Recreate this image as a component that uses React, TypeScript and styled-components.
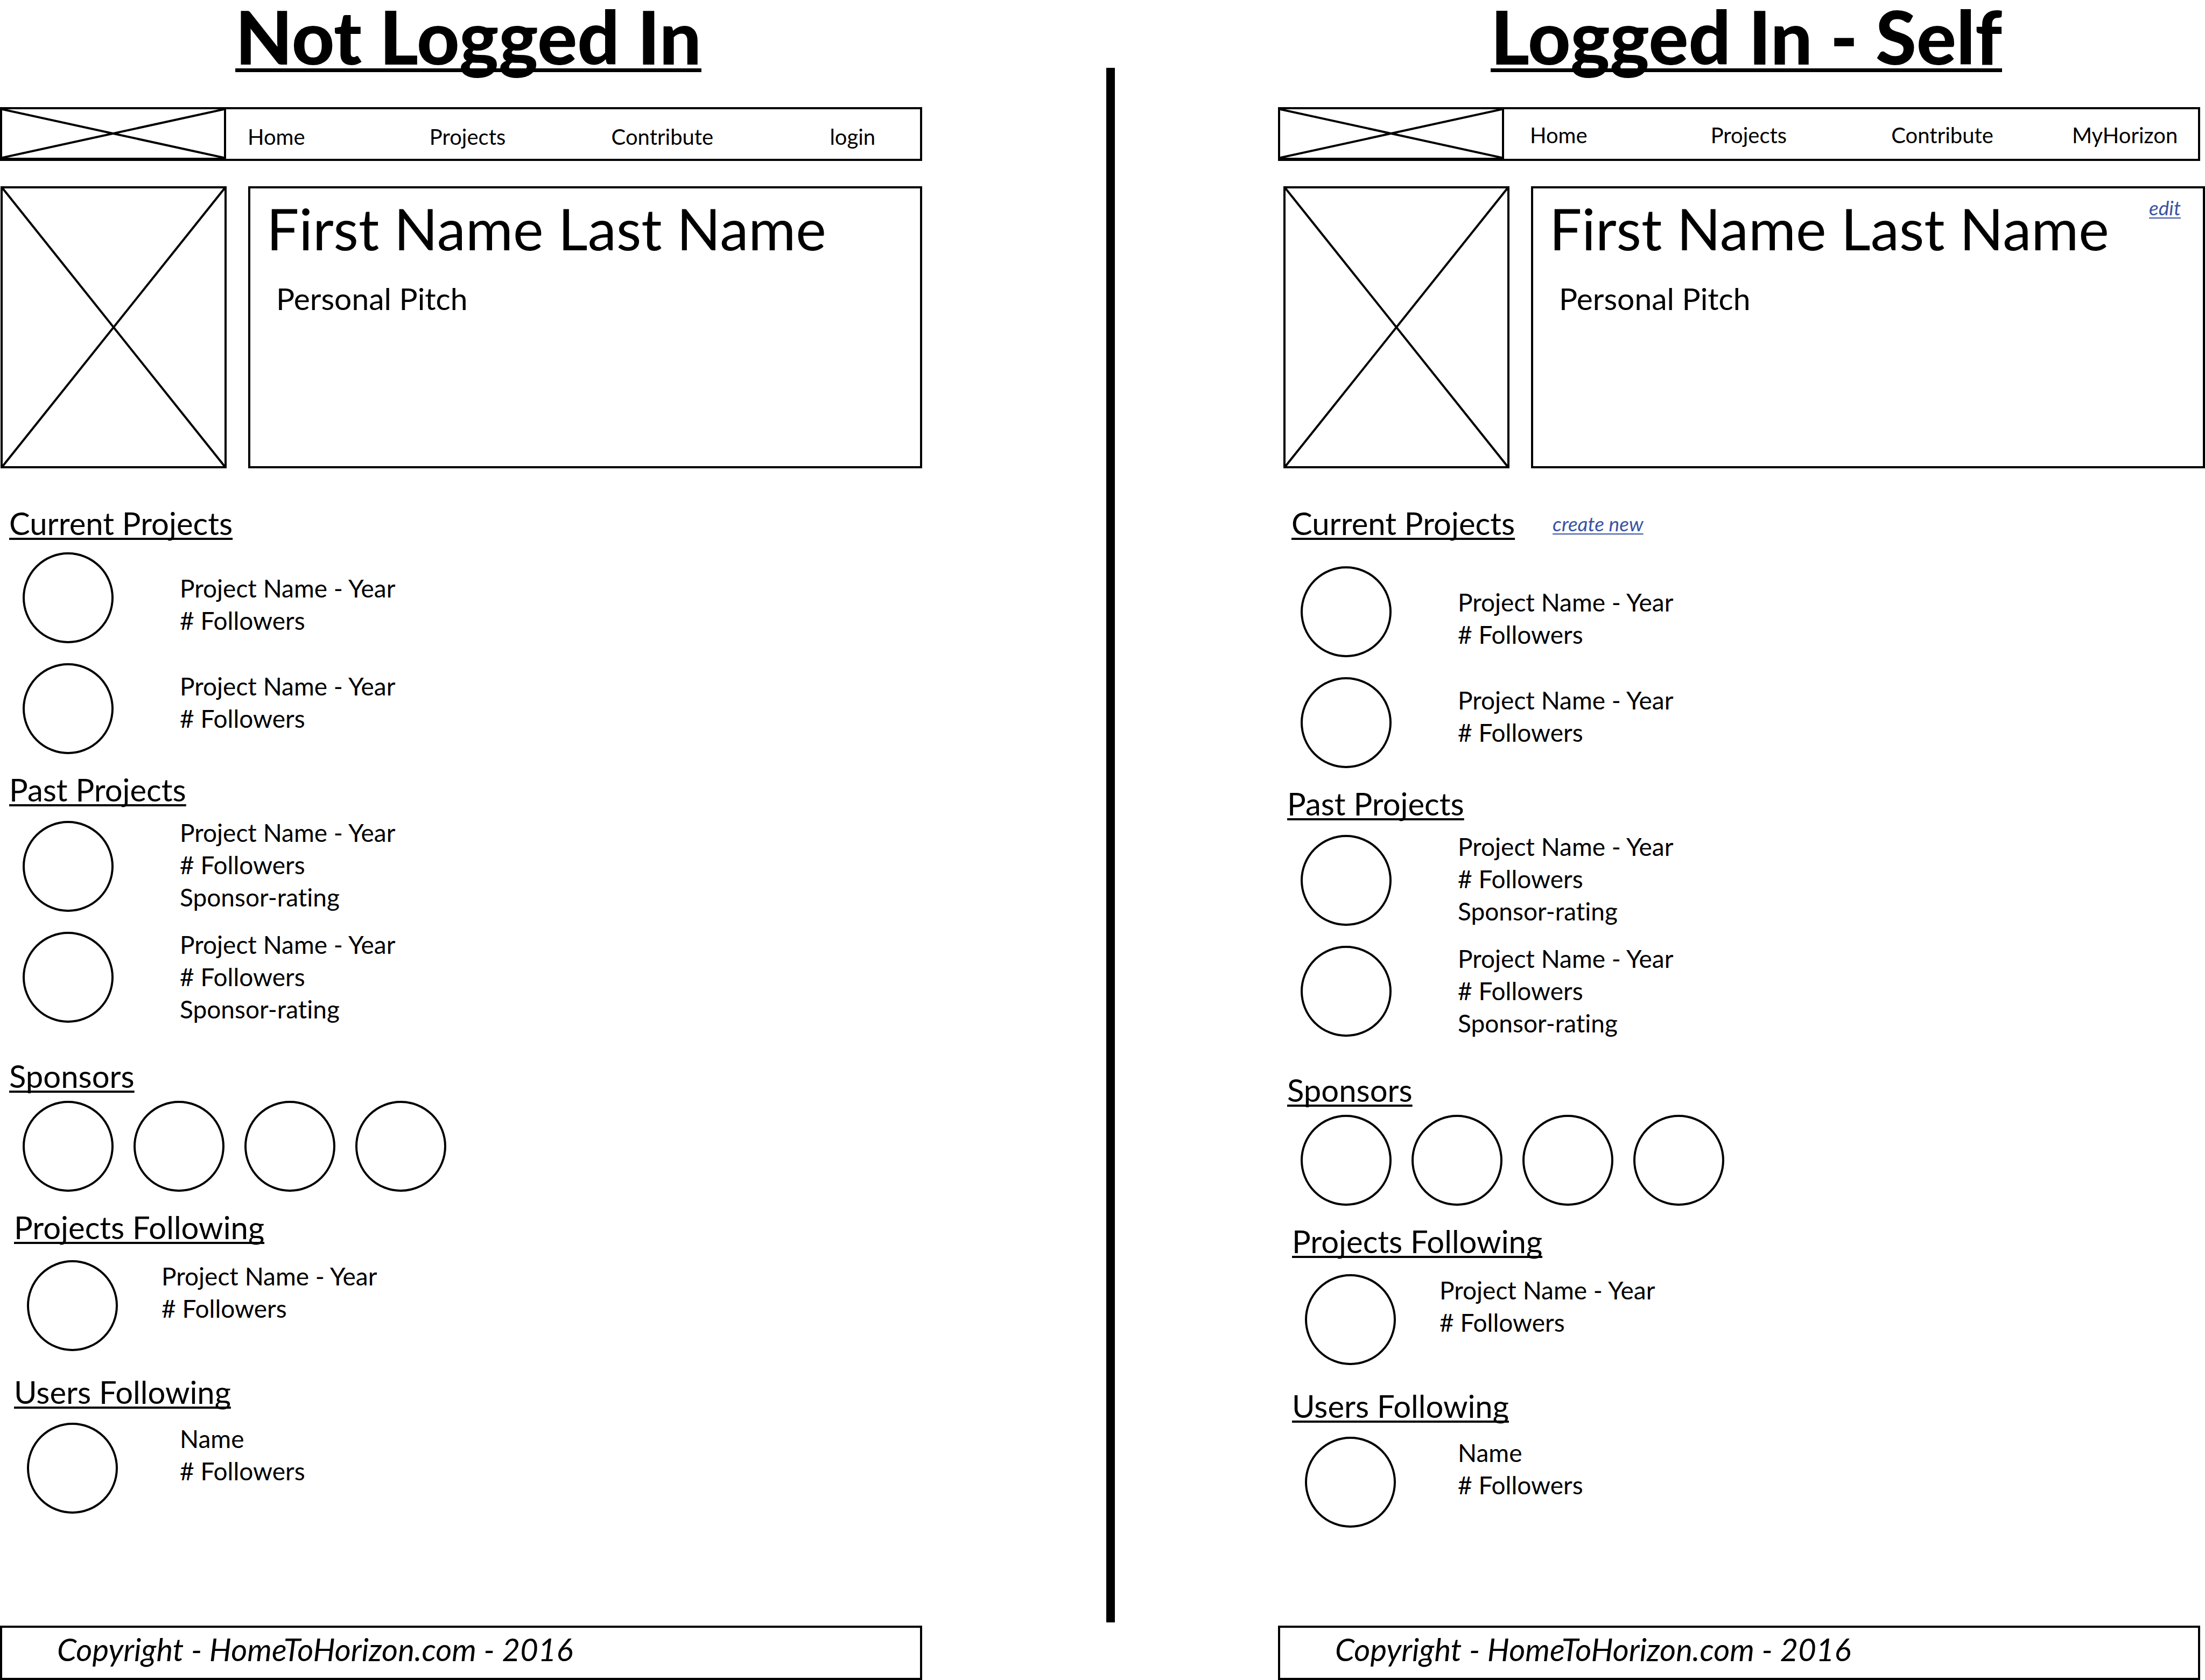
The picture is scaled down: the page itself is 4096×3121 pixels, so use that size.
import React from "react";
import styled, { createGlobalStyle } from "styled-components";

const ink = "#000";
const stroke = `4px solid ${ink}`;

const GlobalStyle = createGlobalStyle`
  *, *::before, *::after { box-sizing: border-box; }
  body {
    margin: 0;
    background: #fff;
    color: ${ink};
    font-family: Lato, "Noto Sans", sans-serif;
    font-variant-ligatures: none;
  }
  h1, h2, h3, p, ul { margin: 0; padding: 0; font-weight: 400; }
  ul { list-style: none; }
`;

const Board = styled.main`
  display: grid;
  grid-template-columns: minmax(0, 1713fr) minmax(0, 661fr) minmax(0, 1722fr);
  min-height: 100vh;
`;

const Gutter = styled.div`
  display: flex;
  justify-content: center;
  padding: 126px 0 107px 39px;
`;

const Divider = styled.div`
  width: 16px;
  background: ${ink};
`;

const Panel = styled.section<{ $member: boolean }>`
  display: flex;
  flex-direction: column;
  padding-right: ${(p) => (p.$member ? 9 : 0)}px;
`;

const StateTitle = styled.h1`
  padding-left: 27px;
  margin-bottom: 65px;
  text-align: center;
  font-size: 138px;
  line-height: 134px;
  font-weight: 900;
  white-space: nowrap;
  text-decoration: underline;
  text-decoration-thickness: 7px;
  text-underline-offset: 7px;
  text-decoration-skip-ink: none;
`;

const NavBar = styled.header`
  display: flex;
  height: 100px;
  border: ${stroke};
`;

const Logo = styled.div`
  flex: 0 0 416px;
  border-right: ${stroke};
  border-bottom: 2px solid ${ink};
`;

const Cross = styled.svg`
  display: block;
  width: 100%;
  height: 100%;
  stroke: ${ink};
  stroke-width: 4px;
`;

const NavLinks = styled.nav<{ $member: boolean }>`
  flex: 1;
  display: grid;
  grid-template-columns: 337fr 337fr 337fr 235fr;
  padding: ${(p) => (p.$member ? "25px 0 0 48px" : "28px 0 0 40px")};
`;

const NavLink = styled.a<{ $inset?: number }>`
  padding-left: ${(p) => p.$inset ?? 0}px;
  color: ${ink};
  font-size: 40px;
  line-height: 47px;
  text-decoration: none;
  white-space: nowrap;
`;

const Profile = styled.div<{ $member: boolean }>`
  display: flex;
  gap: 40px;
  height: 524px;
  margin: ${(p) => (p.$member ? "47px -9px 0 10px" : "47px 0 0 1px")};
`;

const Photo = styled.div`
  flex: 0 0 420px;
  border: ${stroke};
`;

const Bio = styled.div`
  flex: 1;
  min-width: 0;
  border: ${stroke};
  padding: 10px 41px 0 30px;
`;

const SplitLine = styled.div<{ $gap?: number; $left?: number }>`
  display: flex;
  align-items: flex-start;
  justify-content: ${(p) => (p.$gap ? "flex-start" : "space-between")};
  gap: ${(p) => p.$gap ?? 0}px;
  padding-left: ${(p) => p.$left ?? 0}px;
`;

const PersonName = styled.h2`
  font-size: 107px;
  line-height: 128px;
  white-space: nowrap;
`;

const Pitch = styled.p`
  margin: 32px 0 0 18px;
  font-size: 57px;
  line-height: 68px;
`;

const ActionLink = styled.a<{ $drop: number }>`
  margin-top: ${(p) => p.$drop}px;
  color: #3a53a4;
  font-size: 37px;
  line-height: 44px;
  font-style: italic;
  white-space: nowrap;
  text-decoration: underline;
  text-decoration-thickness: 2px;
  text-underline-offset: 4px;
`;

const Section = styled.section<{ $top: number }>`
  margin-top: ${(p) => p.$top}px;
`;

const Heading = styled.h3`
  font-size: 58px;
  line-height: 68px;
  white-space: nowrap;
  text-decoration: underline;
  text-decoration-thickness: 4px;
  text-underline-offset: 5px;
  text-decoration-skip-ink: none;
`;

const Entries = styled.div<{ $top: number; $left: number; $gap: number }>`
  display: flex;
  align-items: flex-start;
  gap: ${(p) => p.$gap}px;
  padding-left: ${(p) => p.$left}px;
  margin-top: ${(p) => p.$top}px;
`;

const Circles = styled.div<{ $row?: boolean; $top?: number }>`
  display: flex;
  flex-direction: ${(p) => (p.$row ? "row" : "column")};
  gap: 37px;
  padding-top: ${(p) => p.$top ?? 0}px;
`;

const Circle = styled.span`
  width: 169px;
  height: 169px;
  border: ${stroke};
  border-radius: 50%;
`;

const EntryTexts = styled.ul<{ $top?: number; $gap?: number }>`
  display: flex;
  flex-direction: column;
  gap: ${(p) => p.$gap ?? 0}px;
  padding-top: ${(p) => p.$top ?? 0}px;
`;

const EntryText = styled.li`
  font-size: 46px;
  line-height: 60px;
  white-space: nowrap;
`;

const Footer = styled.footer`
  height: 101px;
  margin-top: auto;
  border: ${stroke};
  padding: 5px 0 0 102px;
  font-size: 58px;
  line-height: 70px;
  font-style: italic;
  white-space: nowrap;
`;

function CrossBox() {
  return (
    <Cross aria-hidden="true">
      <line x1="0" y1="0" x2="100%" y2="100%" />
      <line x1="0" y1="100%" x2="100%" y2="0" />
    </Cross>
  );
}

const current = ["Project Name - Year", "# Followers"];
const past = [...current, "Sponsor-rating"];

function Entry({ lines }: { lines: string[] }) {
  return (
    <EntryText>
      {lines.map((line) => (
        <p key={line}>{line}</p>
      ))}
    </EntryText>
  );
}

function ProfileWireframe({ title, member }: { title: string; member: boolean }) {
  return (
    <Panel $member={member}>
      <StateTitle>{title}</StateTitle>
      <NavBar>
        <Logo>
          <CrossBox />
        </Logo>
        <NavLinks $member={member}>
          <NavLink href="#home">Home</NavLink>
          <NavLink href="#projects">Projects</NavLink>
          <NavLink href="#contribute">Contribute</NavLink>
          {member ? (
            <NavLink href="#me">MyHorizon</NavLink>
          ) : (
            <NavLink href="#login" $inset={68}>login</NavLink>
          )}
        </NavLinks>
      </NavBar>

      <Profile $member={member}>
        <Photo>
          <CrossBox />
        </Photo>
        <Bio>
          <SplitLine>
            <PersonName>First Name Last Name</PersonName>
            {member && <ActionLink href="#edit" $drop={4}>edit</ActionLink>}
          </SplitLine>
          <Pitch>Personal Pitch</Pitch>
        </Bio>
      </Profile>

      <Section $top={68}>
        <SplitLine $gap={70} $left={member ? 25 : 17}>
          <Heading>Current Projects</Heading>
          {member && <ActionLink href="#new" $drop={13}>create new</ActionLink>}
        </SplitLine>
        <Entries $top={member ? 46 : 20} $left={42} $gap={123}>
          <Circles>
            <Circle />
            <Circle />
          </Circles>
          <EntryTexts $top={37} $gap={62}>
            <Entry lines={current} />
            <Entry lines={current} />
          </EntryTexts>
        </Entries>
      </Section>

      <Section $top={32}>
        <SplitLine $left={17}>
          <Heading>Past Projects</Heading>
        </SplitLine>
        <Entries $top={16} $left={42} $gap={123}>
          <Circles $top={8}>
            <Circle />
            <Circle />
          </Circles>
          <EntryTexts $gap={28}>
            <Entry lines={past} />
            <Entry lines={past} />
          </EntryTexts>
        </Entries>
      </Section>

      <Section $top={60}>
        <SplitLine $left={17}>
          <Heading>Sponsors</Heading>
        </SplitLine>
        <Entries $top={12} $left={42} $gap={0}>
          <Circles $row>
            <Circle />
            <Circle />
            <Circle />
            <Circle />
          </Circles>
        </Entries>
      </Section>

      <Section $top={32}>
        <SplitLine $left={26}>
          <Heading>Projects Following</Heading>
        </SplitLine>
        <Entries $top={27} $left={50} $gap={81}>
          <Circles>
            <Circle />
          </Circles>
          <EntryTexts>
            <Entry lines={current} />
          </EntryTexts>
        </Entries>
      </Section>

      <Section $top={42}>
        <SplitLine $left={26}>
          <Heading>Users Following</Heading>
        </SplitLine>
        <Entries $top={23} $left={50} $gap={115}>
          <Circles>
            <Circle />
          </Circles>
          <EntryTexts>
            <Entry lines={["Name", "# Followers"]} />
          </EntryTexts>
        </Entries>
      </Section>

      <Footer>Copyright - HomeToHorizon.com - 2016</Footer>
    </Panel>
  );
}

export default function App() {
  return (
    <>
      <GlobalStyle />
      <Board>
        <ProfileWireframe title="Not Logged In" member={false} />
        <Gutter>
          <Divider />
        </Gutter>
        <ProfileWireframe title="Logged In - Self" member />
      </Board>
    </>
  );
}
